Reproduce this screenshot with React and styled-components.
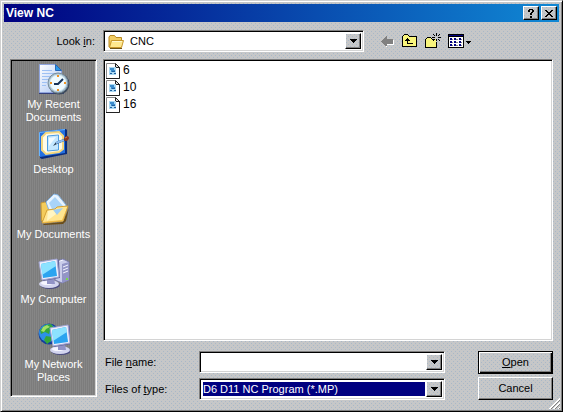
import React, { useState } from 'react'
import styled, { createGlobalStyle, css } from 'styled-components'

const places = [
  { label: 'My Recent Documents', icon: RecentIcon },
  { label: 'Desktop', icon: DesktopIcon },
  { label: 'My Documents', icon: DocumentsIcon },
  { label: 'My Computer', icon: ComputerIcon },
  { label: 'My Network Places', icon: NetworkIcon },
]

const files = ['6', '10', '16']

const App = () => {
  const [fileName, setFileName] = useState('')

  return (
    <>
      <GlobalStyle />
      <Dialog>
        <TitleBar>
          <Title>View NC</Title>
          <TitleButton type='button' aria-label='Help'><HelpGlyph /></TitleButton>
          <TitleButton type='button' aria-label='Close'><CloseGlyph /></TitleButton>
        </TitleBar>

        <LookInRow>
          <LookInLabel htmlFor='look-in'>Look <u>i</u>n:</LookInLabel>
          <Combo>
            <FolderIcon />
            <Select id='look-in'>
              <option>CNC</option>
            </Select>
            <Arrow aria-hidden='true'><ArrowGlyph /></Arrow>
          </Combo>
          <Toolbar>
            <ToolButton type='button' aria-label='Back' disabled><BackIcon /></ToolButton>
            <ToolButton type='button' aria-label='Up one level'><UpIcon /></ToolButton>
            <ToolButton type='button' aria-label='Create new folder'><NewFolderIcon /></ToolButton>
            <ToolButton type='button' aria-label='Views'><ViewsIcon /></ToolButton>
          </Toolbar>
        </LookInRow>

        <Body>
          <Places aria-label='Places'>
            {places.map(({ label, icon: Icon }) => (
              <Place key={label} type='button'>
                <Icon />
                <span>{label}</span>
              </Place>
            ))}
          </Places>

          <Main>
            <FileList>
              {files.map((name) => (
                <li key={name}>
                  <File type='button'><FileIcon />{name}</File>
                </li>
              ))}
            </FileList>

            <Footer>
              <Fields>
                <Field>
                  <label htmlFor='file-name'>File <u>n</u>ame:</label>
                  <Combo>
                    <Input id='file-name' value={fileName} onChange={(e) => setFileName(e.target.value)} />
                    <ArrowButton type='button' aria-label='Recent file names'><ArrowGlyph /></ArrowButton>
                  </Combo>
                </Field>
                <Field>
                  <label htmlFor='file-type'>Files of <u>t</u>ype:</label>
                  <Combo>
                    <Select id='file-type' $selected>
                      <option>D6 D11 NC Program (*.MP)</option>
                    </Select>
                    <Arrow aria-hidden='true'><ArrowGlyph /></Arrow>
                  </Combo>
                </Field>
              </Fields>
              <Actions>
                <Button type='button' $default><u>O</u>pen</Button>
                <Button type='button'>Cancel</Button>
              </Actions>
            </Footer>
          </Main>
        </Body>
        <Grip />
      </Dialog>
    </>
  )
}

export default App

function HelpGlyph() {
  return (
    <svg width='8' height='9' viewBox='0 0 8 9' shapeRendering='crispEdges' aria-hidden='true'>
      <path d='M2 0h4v1H2zM1 1h2v2H1zM5 1h2v2H5zM4 3h2v1H4zM3 4h2v2H3zM3 7h2v2H3z' />
    </svg>
  )
}

function CloseGlyph() {
  return (
    <svg width='8' height='7' viewBox='0 0 8 7' shapeRendering='crispEdges' aria-hidden='true'>
      <path d='M0 0h2v1H0zM6 0h2v1H6zM1 1h2v1H1zM5 1h2v1H5zM2 2h4v1H2zM3 3h2v1H3zM2 4h4v1H2zM1 5h2v1H1zM5 5h2v1H5zM0 6h2v1H0zM6 6h2v1H6z' />
    </svg>
  )
}

function ArrowGlyph() {
  return (
    <svg width='7' height='4' viewBox='0 0 7 4' shapeRendering='crispEdges' aria-hidden='true'>
      <path d='M0 0h7v1H0zM1 1h5v1H1zM2 2h3v1H2zM3 3h1v1H3z' />
    </svg>
  )
}

function BackIcon() {
  return (
    <svg width='16' height='16' viewBox='0 0 16 16' shapeRendering='crispEdges' aria-hidden='true'>
      <path fill='#fff' d='M8 11h7v1H8zM14 7h1v5h-1zM7 12h1v2H7zM6 12h1v1H6z' />
      <path fill='#808080' d='M2 8h1v1H2zM3 7h1v3H3zM4 6h1v5H4zM5 5h1v7H5zM6 4h1v9H6zM7 3h1v10H7zM8 6h6v5H8z' />
    </svg>
  )
}

function UpIcon() {
  return (
    <svg width='16' height='16' viewBox='0 0 16 16' shapeRendering='crispEdges' aria-hidden='true'>
      <path fill='#f8f47c' d='M1 3h13v10H1zM2 2h4v1H2z' />
      <path d='M2 1h4v1H2zM1 2h1v1H1zM6 2h1v1H6zM0 3h1v10H0zM7 3h7v1H7zM14 3h1v11h-1zM0 13h15v1H0z' />
      <path d='M5 5h1v1H5zM4 6h3v1H4zM3 7h5v1H3zM5 8h1v3H5zM5 10h6v1H5z' />
    </svg>
  )
}

function NewFolderIcon() {
  return (
    <svg width='16' height='16' viewBox='0 0 16 16' shapeRendering='crispEdges' aria-hidden='true'>
      <path fill='#f8f47c' d='M1 6h10v8H1zM2 5h4v1H2z' />
      <path d='M2 4h4v1H2zM1 5h1v1H1zM6 5h1v1H6zM0 6h1v8H0zM7 6h3v1H7zM11 9h1v6h-1zM0 14h12v1H0z' />
      <path d='M11 0h1v3h-1zM11 6h1v2h-1zM7 4h3v1H7zM13 4h3v1h-3zM8 1h1v1H8zM9 2h1v1H9zM14 1h1v1h-1zM13 2h1v1h-1zM13 6h1v1h-1zM14 7h1v1h-1zM9 6h1v1H9zM8 7h1v1H8z' />
    </svg>
  )
}

function ViewsIcon() {
  return (
    <svg width='23' height='16' viewBox='0 0 23 16' shapeRendering='crispEdges' aria-hidden='true'>
      <path d='M0 1h16v14H0z' />
      <path fill='#000080' d='M1 2h14v1H1z' />
      <path fill='#fff' d='M1 4h14v10H1z' />
      <path fill='#000080' d='M2 5h2v2H2zM6 5h2v2H6zM11 5h2v2h-2zM2 8h2v2H2zM6 8h2v2H6zM11 8h2v2h-2zM2 11h2v2H2zM6 11h2v2H6zM11 11h2v2h-2z' />
      <path fill='#808080' d='M4 6h1v1H4zM8 6h2v1H8zM13 6h1v1h-1zM4 9h1v1H4zM8 9h2v1H8zM13 9h1v1h-1zM4 12h1v1H4zM8 12h2v1H8zM13 12h1v1h-1z' />
      <path d='M18 8h5v1h-5zM19 9h3v1h-3zM20 10h1v1h-1z' />
    </svg>
  )
}

function FolderIcon() {
  return (
    <svg width='16' height='16' viewBox='0 0 16 16' aria-hidden='true'>
      <path fill='#f2cd63' stroke='#b98a22' d='M1 13V3l1-1.500h4.500L8 3.500h5.500v9.500H2z' />
      <path fill='#ffe88f' stroke='#c7972c' d='M1.500 13.500 3.500 6.500h12l-2 7z' />
      <path stroke='#fff7cf' d='M4 7.500h10' />
      <path stroke='#6e5216' d='M2 14.500h12' />
    </svg>
  )
}

function FileIcon() {
  return (
    <svg width='14' height='16' viewBox='0 0 14 16' aria-hidden='true'>
      <path fill='#fff' stroke='#888' d='M.5.500h9l4 4v11H.5z' />
      <path fill='#ddd' stroke='#222' d='M9.500.500v4h4z' />
      <path stroke='#222' fill='none' d='M13.500 4v11.500H0' />
      <path fill='#a9d8f2' d='M3 4h7v8H3z' />
      <path fill='#3c8ccc' d='M4 5h4v2H4zM5 7h4v2H5z' />
      <path fill='#1f5f9f' d='M6 8h3v1H6zM4 10h2v1H4zM8 10h2v1H8z' />
    </svg>
  )
}

function RecentIcon() {
  return (
    <svg width='32' height='32' viewBox='0 0 32 32' aria-hidden='true'>
      <defs>
        <linearGradient id='page' x1='0' y1='0' x2='1' y2='1'>
          <stop offset='0' stopColor='#fff' />
          <stop offset='1' stopColor='#a9c4f2' />
        </linearGradient>
      </defs>
      <path fill='#35407c' d='M1 31V29h23v-2h2v4z' />
      <path fill='url(#page)' stroke='#8fa4de' d='M1.500 1.500h16l6 6v22h-22z' />
      <path fill='#2c9ae8' stroke='#2568ba' d='M17.500 1.500v6h6z' />
      <path stroke='#9ec1f4' d='M4 7.500h10M4 10.500h13M4 13.500h10M4 16.500h7M4 19.500h5M4 22.500h4' />
      <circle cx='21' cy='21' r='10.500' fill='#3d4b5c' />
      <circle cx='20' cy='20' r='10' fill='#a9c3d2' stroke='#788b9b' />
      <circle cx='20' cy='20' r='8' fill='#eefaff' stroke='#d4e8f1' />
      <path stroke='#f09222' strokeWidth='2' d='M20 12v2M20 26v2M12 20h2M26 20h2' />
      <path stroke='#173257' strokeWidth='2' fill='none' d='m25 16-5 5h-4' />
    </svg>
  )
}

function DesktopIcon() {
  return (
    <svg width='32' height='32' viewBox='0 0 32 32' aria-hidden='true'>
      <path fill='#0a2c7c' d='m2 4 26-3 1 1v24L4 31l-2-1z' />
      <path fill='#2470e2' d='m1 4 26-3v24L2 29z' />
      <path stroke='#68b4ff' fill='none' d='M1.500 28V4.500L27 1.500' />
      <path fill='#fffbe8' stroke='#f3d780' strokeWidth='2' d='m8 5 13-1 4 4v13l-4 3-13 2-4-4V9z' />
      <path fill='#c4e7ff' stroke='#4d9de4' d='m9.500 8 11-1v15l-11 1z' />
      <path fill='#eff9ff' d='m11 10 7-1-7 9z' />
      <path fill='#23384f' d='m15 18 3-4 10-4 1 2-10 4z' />
      <path stroke='#8dbdf0' strokeWidth='2' d='m18 15 8-3' />
      <path stroke='#8c351b' strokeWidth='4' strokeLinecap='round' d='m28 11 1-1' />
      <path stroke='#d57a4d' d='m27 10 2-1' />
    </svg>
  )
}

function DocumentsIcon() {
  return (
    <svg width='32' height='32' viewBox='0 0 32 32' aria-hidden='true'>
      <path fill='#6b4d18' d='m5 31 20-2 6-14-3 13-3 3-19 1z' />
      <path fill='#f4cc5c' stroke='#c99a35' d='m3.500 28-.5-18 4-1 2 2 5-1v15z' />
      <path fill='#e8f4ff' stroke='#83b4e5' d='m8 9 8-8 4 1 8 10-2 8-13 3z' />
      <path fill='#a9d4f8' d='m11 10 6-6 8 9-9 7z' />
      <path fill='#ffe590' stroke='#d4a136' d='m4 30 5-13 8-1 2-2 11-1-5 15z' />
      <path fill='#9dcdf4' d='m15 17 10-2-6 7z' />
      <path fill='#fff5c2' d='m10 18 5-1 3 4-9 7z' />
      <path fill='#f0bc49' d='m5 29 19-2 5-12-4 13-19 2z' />
    </svg>
  )
}

function Monitor() {
  return (
    <>
      <ellipse cx='12' cy='27' rx='10' ry='4' fill='#4c4d82' />
      <ellipse cx='11' cy='26' rx='10' ry='4' fill='#d3d5ef' />
      <ellipse cx='9' cy='25' rx='6' ry='2' fill='#f6f6ff' />
      <path fill='#9193c6' d='M9 20h7l1 6H9z' />
      <path fill='#65679c' d='m19 1 2 1 1 18-17 3-1-2z' />
      <path fill='#eeeffc' stroke='#a2a5d2' d='m1 4 18-3 2 18-17 3z' />
      <path fill='#2ba4f0' d='m3 6 14-3 2 15-14 2z' />
      <path fill='#8ce2ff' d='m3 6 14-3 1 5L4 17z' />
    </>
  )
}

function ComputerIcon() {
  return (
    <svg width='32' height='32' viewBox='0 0 32 32' aria-hidden='true'>
      <path fill='#c9ccea' stroke='#7a7cae' d='m17 4 8-3 6 3v18l-7 3-7-3z' />
      <path fill='#9295c6' d='m24 6 7-2v18l-7 3z' />
      <path stroke='#f3f4ff' d='m19 4 6-2M25 9l5-2M25 12l5-2M25 15l5-2' />
      <path fill='#77db4c' d='M28 20h2v2h-2z' />
      <Monitor />
    </svg>
  )
}

function NetworkIcon() {
  return (
    <svg width='32' height='32' viewBox='0 0 32 32' aria-hidden='true'>
      <circle cx='11' cy='11' r='10.500' fill='#143f9c' />
      <circle cx='10' cy='10' r='9' fill='#2d91e8' />
      <path fill='#35a53c' d='m2 7 5-5 6-1 4 5-5 1-1 4-4-2-4 2zM8 13l6 1-1 4-4 3-3-4z' />
      <path fill='#a4e067' d='m5 4 4-2 3 2-4 2-2 3-3-1z' />
      <g transform='translate(11 1)'>
        <Monitor />
      </g>
    </svg>
  )
}

const GlobalStyle = createGlobalStyle`
  * {
    box-sizing: border-box;
  }

  body {
    margin: 0;
    font: 11px/13px "Liberation Sans", Arial, sans-serif;
    color: #000;
  }

  button, input, select {
    font: inherit;
    color: inherit;
    border: 0;
    padding: 0;
    margin: 0;
    border-radius: 0;
  }

  svg {
    display: block;
    flex: none;
  }
`

/* 256 colour grey: one bluish dot in every 4px cell, second layer staggered */
const face = css`
  background-color: #c6c7c8;
  background-image:
    linear-gradient(#a9b8c8, #a9b8c8),
    linear-gradient(#a9b8c8, #a9b8c8);
  background-image:
    conic-gradient(from 270deg at 1px 1px, #a9b8c8 90deg, transparent 0),
    conic-gradient(from 270deg at 1px 1px, #a9b8c8 90deg, transparent 0);
  background-size: 4px 4px;
  background-position: 0 0, 2px 2px;
`

const sunken = css`
  border: 1px solid;
  border-color: #808080 #fff #fff #808080;
  box-shadow: inset 1px 1px #000, inset -1px -1px #d4d4d4;
  padding: 2px;
`

const raised = css`
  ${face}
  border: 1px solid;
  border-color: #fff #000 #000 #fff;
  box-shadow: inset -1px -1px #808080;
`

const Dialog = styled.main`
  ${face}
  position: relative;
  display: flex;
  flex-direction: column;
  min-height: 100vh;
  padding: 3px;
  border: 1px solid;
  border-color: #d0d0d0 #000 #000 #d0d0d0;
  box-shadow: inset 1px 1px #fff, inset -1px -1px #808080;
`

const TitleBar = styled.header`
  display: flex;
  align-items: center;
  height: 18px;
  padding: 0 2px;
  background: linear-gradient(90deg, #000080, #1088d4);
`

const Title = styled.h1`
  flex: 1;
  margin: 0;
  font-size: 12px;
  font-weight: bold;
  color: #fff;
`

const TitleButton = styled.button`
  ${raised}
  display: flex;
  align-items: center;
  justify-content: center;
  width: 16px;
  height: 14px;

  & + & {
    margin-left: 2px;
  }
`

const LookInRow = styled.div`
  display: flex;
  align-items: center;
  padding: 8px 6px 7px;
`

const LookInLabel = styled.label`
  width: 93px;
  padding-right: 8px;
  text-align: right;
`

const Combo = styled.div`
  ${sunken}
  display: flex;
  flex: 1;
  min-width: 0;
  height: 22px;
  background-color: #fff;

  & > svg {
    margin: 1px 3px 0 2px;
  }
`

const Select = styled.select`
  flex: 1;
  min-width: 0;
  padding: 0 3px;
  appearance: none;
  outline: 0;
  background: #fff;

  ${({ $selected }) => $selected && css`
    padding: 0;
    margin: 1px;
    background: #000080;
    color: #fff;
  `}
`

const Input = styled.input`
  flex: 1;
  min-width: 0;
  padding: 0 2px;
  outline: 0;
  background: #fff;
`

const arrowBox = css`
  ${raised}
  display: flex;
  align-items: center;
  justify-content: center;
  width: 16px;
`

const Arrow = styled.span`
  ${arrowBox}
`

const ArrowButton = styled.button`
  ${arrowBox}
`

const Toolbar = styled.div`
  display: flex;
  flex: 0 0 189px;
  padding-left: 12px;
`

const ToolButton = styled.button`
  padding: 0 4px 0 3px;
  background: none;
`

const Body = styled.div`
  display: flex;
  flex: 1;
  gap: 6px;
  padding: 0 6px;
`

const Places = styled.nav`
  ${sunken}
  display: flex;
  flex-direction: column;
  gap: 4px;
  width: 87px;
  margin-bottom: 11px;
  background: repeating-linear-gradient(90deg, #7c7c7c 0 1px, #868686 1px 2px);
`

const Place = styled.button`
  display: flex;
  flex-direction: column;
  align-items: center;
  gap: 3px;
  height: 61px;
  padding: 1px 0 0;
  background: none;
  color: #fff;

  span {
    padding: 0 2px;
  }
`

const Main = styled.div`
  display: flex;
  flex: 1;
  flex-direction: column;
  min-width: 0;
`

const FileList = styled.ul`
  ${sunken}
  flex: 1;
  margin: 0;
  list-style: none;
  background: #fff;
`

const File = styled.button`
  display: flex;
  align-items: center;
  gap: 3px;
  height: 17px;
  background: none;
  font-size: 12px;
`

const Footer = styled.div`
  display: flex;
  gap: 33px;
  padding: 10px 0 8px 2px;
`

const Fields = styled.div`
  display: flex;
  flex: 1;
  flex-direction: column;
  gap: 5px;
`

const Field = styled.div`
  display: flex;
  align-items: center;

  label {
    width: 94px;
  }
`

const Actions = styled.div`
  display: flex;
  flex-direction: column;
  gap: 3px;
`

const Button = styled.button`
  ${raised}
  width: 75px;
  height: 23px;

  ${({ $default }) => $default && css`
    border-color: #000;
    box-shadow: inset 1px 1px #fff, inset -1px -1px #000, inset -2px -2px #808080;
  `}
`

const Grip = styled.div`
  position: absolute;
  right: 2px;
  bottom: 2px;
  width: 12px;
  height: 12px;
  background: repeating-linear-gradient(135deg, #fff 0 1px, #808080 1px 2px, transparent 2px 3px);
  clip-path: polygon(100% 0, 100% 100%, 0 100%);
`
